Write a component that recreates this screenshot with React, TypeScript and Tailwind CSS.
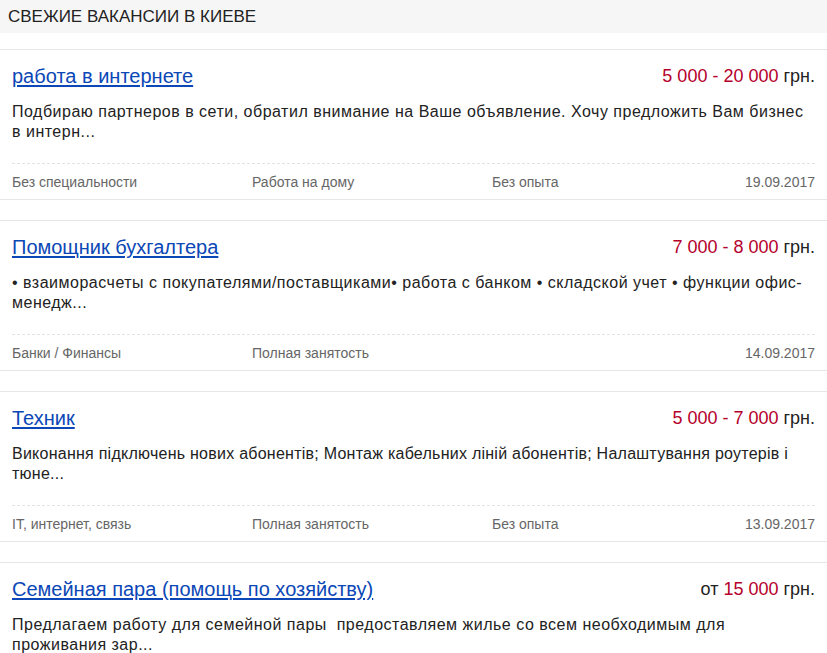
import React from 'react';

type Job = {
    title: string;
    prefix?: string;
    salary: string;
    desc: string;
    tight?: boolean;
    meta: string[];
    date: string;
};

const jobs: Job[] = [
    {
        title: 'работа в интернете',
        salary: '5 000 - 20 000',
        desc: 'Подбираю партнеров в сети, обратил внимание на Ваше объявление. Хочу предложить Вам бизнес в интерн...',
        meta: ['Без специальности', 'Работа на дому', 'Без опыта'],
        date: '19.09.2017',
    },
    {
        title: 'Помощник бухгалтера',
        salary: '7 000 - 8 000',
        desc: '• взаиморасчеты с покупателями/поставщиками• работа с банком • складской учет • функции офис-менедж...',
        meta: ['Банки / Финансы', 'Полная занятость', ''],
        date: '14.09.2017',
    },
    {
        title: 'Техник',
        salary: '5 000 - 7 000',
        desc: 'Виконання підключень нових абонентів; Монтаж кабельних ліній абонентів; Налаштування роутерів і тюне...',
        tight: true,
        meta: ['IT, интернет, связь', 'Полная занятость', 'Без опыта'],
        date: '13.09.2017',
    },
    {
        title: 'Семейная пара (помощь по хозяйству)',
        prefix: 'от ',
        salary: '15 000',
        desc: 'Предлагаем работу для семейной пары\u00a0 предоставляем жилье со всем необходимым для проживания зар...',
        meta: ['', '', ''],
        date: '',
    },
];

const JobCard = ({ job }: { job: Job }) => (
    <div className="border-y border-[#e6e6e6] px-3 pt-[14px] pb-[8px] mb-[20px]">
        {/* Title + salary */}
        <div className="flex items-center justify-between h-[24px]">
            <a href="#" className="text-[20px] leading-[24px] text-[#0b47b6] underline underline-offset-[2px]">
                {job.title}
            </a>
            <span className="text-[18px] leading-[24px] text-[#222]">
                {job.prefix}
                <span className="text-[#b5002b]">{job.salary}</span> грн.
            </span>
        </div>

        <p
            className={`mt-[14px] text-[16px] leading-[20px] text-[#222] ${
                job.tight ? 'tracking-[0.25px]' : 'tracking-[0.5px]'
            }`}
        >
            {job.desc}
        </p>

        {/* Meta */}
        <div className="mt-[21px] border-t border-dashed border-[#e3e3e3] pt-[9px] flex text-[14px] leading-[18px] text-[#666]">
            <span className="w-[240px]">{job.meta[0]}</span>
            <span className="w-[240px]">{job.meta[1]}</span>
            <span className="flex-1">{job.meta[2]}</span>
            <span>{job.date}</span>
        </div>
    </div>
);

const App = () => {
    return (
        <div className="w-[827px] h-[653px] overflow-hidden bg-white font-['Liberation_Sans',Arial,sans-serif]">
            {/* Header */}
            <div className="h-[33px] bg-[#f6f6f6] px-2 flex items-center">
                <h2 className="text-[17px] text-[#222] uppercase">Свежие вакансии в Киеве</h2>
            </div>

            <div className="pt-[16px]">
                {jobs.map((job, i) => (
                    <JobCard key={i} job={job} />
                ))}
            </div>
        </div>
    );
};

export default App;
